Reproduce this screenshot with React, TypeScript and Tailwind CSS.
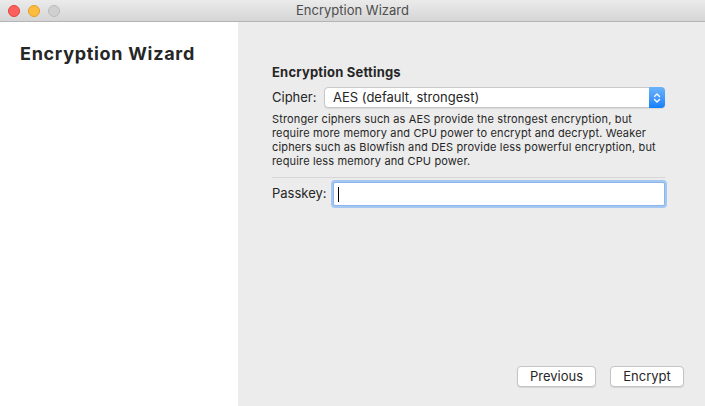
import React from "react";

export default function App() {
  return (
    <div className="w-[705px] h-[406px] flex flex-col overflow-hidden bg-[#ececec] text-[#262626]" style={{ fontFamily: "Inter, 'Liberation Sans', sans-serif" }}>
      <div className="h-[22px] shrink-0 flex items-center relative bg-gradient-to-b from-[#ebebeb] to-[#d5d5d5] border-b border-[#b4b4b4]">
        <div className="flex items-center gap-[8px] pl-[8px]">
          <span className="w-[12px] h-[12px] rounded-full bg-[#fc605c] border border-[#e0443e]" />
          <span className="w-[12px] h-[12px] rounded-full bg-[#fdbc40] border border-[#dea123]" />
          <span className="w-[12px] h-[12px] rounded-full bg-[#d0d0d0] border border-[#bcbcbc]" />
        </div>
        <div className="absolute inset-0 flex items-center justify-center text-[13px] text-[#4d4d4d]">Encryption Wizard</div>
      </div>
      <div className="flex flex-1">
        <div className="w-[238px] bg-white pl-[20px] pt-[20px]">
          <div className="text-[18px] font-bold text-[#262626] leading-[24px] tracking-[0.7px]">Encryption Wizard</div>
        </div>
        <div className="flex-1 flex flex-col pl-[34px] pr-[40px] pt-[42px] pb-[19px]">
          <div className="text-[13px] font-bold leading-[16px] tracking-[0.2px]">Encryption Settings</div>
          <div className="flex items-center mt-[7px]">
            <span className="text-[13px] w-[52px]">Cipher:</span>
            <div className="flex-1 h-[21px] bg-white rounded-[4px] border border-[#c8c8c8] flex items-center justify-between shadow-[0_1px_1px_rgba(0,0,0,0.08)]">
              <span className="text-[13px] pl-[8px]">AES (default, strongest)</span>
              <span className="w-[16px] h-[21px] -mr-px rounded-r-[4px] bg-gradient-to-b from-[#6cb3fa] to-[#127ffb] flex items-center justify-center">
                <svg width="8" height="12" viewBox="0 0 8 12" fill="none" stroke="white" strokeWidth="1.4" strokeLinecap="round" strokeLinejoin="round">
                  <path d="M1.5 4.5 L4 2 L6.5 4.5" />
                  <path d="M1.5 7.5 L4 10 L6.5 7.5" />
                </svg>
              </span>
            </div>
          </div>
          <p className="text-[11px] leading-[14px] mt-[4px] text-[#262626] tracking-[0.15px] w-[392px]">
            Stronger ciphers such as AES provide the strongest encryption, but require more memory and CPU power to encrypt and decrypt. Weaker ciphers such as Blowfish and DES provide less powerful encryption, but require less memory and CPU power.
          </p>
          <div className="h-px bg-[#d6d6d6] mt-[9px]" />
          <div className="flex items-center mt-[4px]">
            <span className="text-[13px] w-[61px]">Passkey:</span>
            <div className="flex-1 h-[24px] bg-white border border-[#8bb5ec] ring-[2px] ring-[#a5c8f3] rounded-[2px] flex items-center pl-[4px]">
              <span className="w-px h-[15px] bg-black" />
            </div>
          </div>
          <div className="flex-1" />
          <div className="flex justify-end gap-[14px] -mr-[19px]">
            <button className="w-[79px] h-[21px] bg-white rounded-[4px] border border-[#c4c4c4] shadow-[0_1px_1px_rgba(0,0,0,0.1)] text-[13px] text-[#262626]">Previous</button>
            <button className="w-[74px] h-[21px] bg-white rounded-[4px] border border-[#c4c4c4] shadow-[0_1px_1px_rgba(0,0,0,0.1)] text-[13px] text-[#262626]">Encrypt</button>
          </div>
        </div>
      </div>
    </div>
  );
}
